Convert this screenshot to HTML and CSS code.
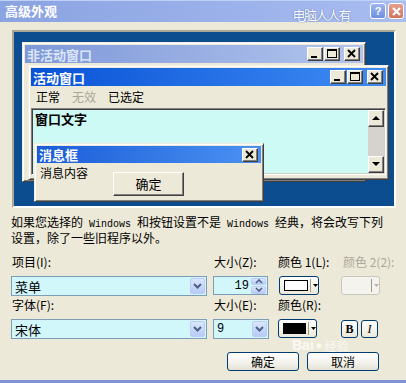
FILE: index.html
```html
<!DOCTYPE html>
<html lang="zh-CN">
<head>
    <meta charset="UTF-8">
    <title>高级外观</title>
    <link rel="stylesheet" href="styles.css">
</head>
<body>
<div class="dlg">
    <!-- title bar -->
    <div class="titlebar">
        <span class="title">高级外观</span>
        <span class="mark">电脑人人有</span>
        <span class="tb-btn help">?</span>
        <span class="tb-btn close">
            <svg width="11" height="11" viewBox="0 0 11 11"><path d="M2 2 L9 9 M9 2 L2 9" stroke="#fff" stroke-width="2.2"/></svg>
        </span>
    </div>

    <!-- preview of the windows -->
    <div class="preview">
        <div class="win inactive">
            <div class="cap">
                <span>非活动窗口</span>
                <div class="capbtns">
                    <span class="cbtn"><svg width="14" height="12"><rect x="3" y="8" width="6" height="2" fill="#000"/></svg></span>
                    <span class="cbtn"><svg width="14" height="12"><rect x="2.5" y="1.5" width="9" height="8" fill="none" stroke="#000"/><rect x="2" y="1" width="10" height="2" fill="#000"/></svg></span>
                    <span class="cbtn gap"><svg width="14" height="12"><path d="M3 2 L10 9 M10 2 L3 9" stroke="#000" stroke-width="1.8"/></svg></span>
                </div>
            </div>
        </div>

        <div class="win active">
            <div class="cap">
                <span>活动窗口</span>
                <div class="capbtns">
                    <span class="cbtn"><svg width="14" height="12"><rect x="3" y="8" width="6" height="2" fill="#000"/></svg></span>
                    <span class="cbtn"><svg width="14" height="12"><rect x="2.5" y="1.5" width="9" height="8" fill="none" stroke="#000"/><rect x="2" y="1" width="10" height="2" fill="#000"/></svg></span>
                    <span class="cbtn gap"><svg width="14" height="12"><path d="M3 2 L10 9 M10 2 L3 9" stroke="#000" stroke-width="1.8"/></svg></span>
                </div>
            </div>
            <div class="menu">
                <span>正常</span>
                <span class="dis">无效</span>
                <span>已选定</span>
            </div>
            <div class="client">
                <b class="wtext">窗口文字</b>
                <div class="scroll">
                    <span class="sbtn"><svg width="8" height="5"><path d="M0 4 L4 0 L8 4 Z" fill="#000"/></svg></span>
                    <span class="track"></span>
                    <span class="sbtn"><svg width="8" height="5"><path d="M0 0 L8 0 L4 4 Z" fill="#000"/></svg></span>
                </div>
            </div>
        </div>

        <div class="win msg">
            <div class="cap">
                <span>消息框</span>
                <div class="capbtns">
                    <span class="cbtn"><svg width="14" height="12"><path d="M3 2 L10 9 M10 2 L3 9" stroke="#000" stroke-width="1.8"/></svg></span>
                </div>
            </div>
            <div class="msgbody">
                <span>消息内容</span>
                <span class="okbtn">确定</span>
            </div>
        </div>
    </div>

    <p class="note">如果您选择的<span class="en"> Windows </span>和按钮设置不是<span class="en"> Windows </span>经典，将会改写下列<br>设置，除了一些旧程序以外。</p>

    <!-- item / font settings -->
    <div class="form">
        <span class="lbl">项目(I):</span>
        <span class="lbl">大小(Z):</span>
        <span class="lbl">颜色 1(L):</span>
        <span class="lbl dis">颜色 2(2):</span>

        <div class="combo wide">
            <span>菜单</span>
            <span class="drop"><svg width="9" height="6"><path d="M1 1 L4.5 4.5 L8 1" fill="none" stroke="#4d6185" stroke-width="2"/></svg></span>
        </div>
        <div class="spin">
            <span>19</span>
            <span class="arrows">
                <span class="half"><svg width="8" height="5"><path d="M1 4 L4 1 L7 4" fill="none" stroke="#4d6185" stroke-width="1.6"/></svg></span>
                <span class="half"><svg width="8" height="5"><path d="M1 1 L4 4 L7 1" fill="none" stroke="#4d6185" stroke-width="1.6"/></svg></span>
            </span>
        </div>
        <div class="colbtn">
            <span class="swatch white"></span>
            <span class="sep"></span>
            <svg width="5" height="3"><path d="M0 0 L5 0 L2.5 3 Z" fill="#000"/></svg>
        </div>
        <div class="colbtn off">
            <span class="swatch none"></span>
            <span class="sep"></span>
            <svg width="5" height="3"><path d="M0 0 L5 0 L2.5 3 Z" fill="#b5b3a8"/></svg>
        </div>

        <span class="lbl">字体(F):</span>
        <span class="lbl">大小(E):</span>
        <span class="lbl">颜色(R):</span>
        <span></span>

        <div class="combo wide">
            <span>宋体</span>
            <span class="drop"><svg width="9" height="6"><path d="M1 1 L4.5 4.5 L8 1" fill="none" stroke="#4d6185" stroke-width="2"/></svg></span>
        </div>
        <div class="combo small">
            <span class="num">9</span>
            <span class="drop"><svg width="9" height="6"><path d="M1 1 L4.5 4.5 L8 1" fill="none" stroke="#4d6185" stroke-width="2"/></svg></span>
        </div>
        <div class="colbtn second">
            <span class="swatch black"></span>
            <span class="sep"></span>
            <svg width="5" height="3"><path d="M0 0 L5 0 L2.5 3 Z" fill="#000"/></svg>
        </div>
        <div class="styles">
            <span class="sq bold">B</span>
            <span class="sq ital">I</span>
        </div>
    </div>

    <div class="actions">
        <span class="btn">确定</span>
        <span class="btn">取消</span>
    </div>

    <div class="wm"><span class="wm-bai">Bai</span><span class="wm-paw">●</span><span class="wm-jy">经验</span></div>
</div>
</body>
</html>
```

FILE: styles.css
```css
body {
    margin: 0;
    padding: 0;
    font-family: "Noto Sans CJK SC", "Liberation Sans", sans-serif;
    font-size: 12px;
    background-color: #ece9d8;
}
.dlg {
    position: relative;
    width: 406px;
    height: 383px;
    box-sizing: border-box;
    background-color: #ece9d8;
    border-bottom: 3px solid #7e91d2;
    overflow: hidden;
}

/* title bar */
.titlebar {
    height: 22px;
    display: flex;
    align-items: center;
    background: linear-gradient(to right, #8aa3e1, #9fb5ec 70%, #a9bdf0);
    box-shadow: inset 0 1px #bfd0f6;
}
.title {
    margin-left: 5px;
    color: #fff;
    font-weight: bold;
    font-size: 13px;
    line-height: 16px;
}
.mark {
    margin-left: auto;
    margin-right: 20px;
    color: #fff;
    font-family: "Noto Sans CJK SC", sans-serif;
    font-size: 13px;
    letter-spacing: -1.5px;
    margin-top: 6px;
    text-shadow: 0 0 1px #5d74b0, 0 0 1px #5d74b0;
}
.tb-btn {
    width: 16px;
    height: 16px;
    box-sizing: border-box;
    border: 1px solid #fff;
    border-radius: 3px;
    display: flex;
    align-items: center;
    justify-content: center;
    margin-right: 2px;
    color: #fff;
    font-weight: bold;
    font-family: "Liberation Sans", sans-serif;
    font-size: 11px;
}
.tb-btn.help {
    background: linear-gradient(#9db4f0, #6e8fe0);
}
.tb-btn.close {
    background: linear-gradient(#e6a08f, #d3725d);
}

/* preview area */
.preview {
    position: relative;
    margin: 8px 0 0 12px;
    width: 384px;
    height: 178px;
    box-sizing: border-box;
    border: 2px solid;
    border-color: #aca899 #fff #fff #aca899;
    background-color: #0c4d90;
}
.win {
    position: absolute;
    box-sizing: border-box;
    background-color: #ece9d8;
    border: 1px solid;
    border-color: #f1efe2 #404040 #404040 #f1efe2;
    box-shadow: inset 1px 1px #fff, inset -1px -1px #808080;
    padding: 2px;
}
.win.inactive {
    left: 8px;
    top: 10px;
    width: 344px;
    height: 140px;
}
.win.active {
    left: 14px;
    top: 33px;
    width: 361px;
    height: 115px;
}
.win.msg {
    left: 20px;
    top: 111px;
    width: 230px;
    height: 59px;
}
.cap {
    height: 18px;
    display: flex;
    align-items: center;
    padding-left: 2px;
    padding-right: 3px;
    color: #fff;
    font-weight: bold;
    font-size: 13px;
    background: linear-gradient(to right, #0a52d6, #3f8cf4);
}
.inactive .cap {
    color: #dbe4f7;
    background: linear-gradient(to right, #7e98d8, #b3c5ee);
}
.msg .cap {
    height: 17px;
    background: linear-gradient(to right, #1a5cd8, #4c92f2);
}
.capbtns {
    margin-left: auto;
    display: flex;
    gap: 1px;
}
.cbtn {
    width: 16px;
    height: 14px;
    box-sizing: border-box;
    background-color: #ece9d8;
    border: 1px solid;
    border-color: #fff #404040 #404040 #fff;
    box-shadow: inset -1px -1px #808080;
    display: flex;
}
.cbtn.gap {
    margin-left: 3px;
}
.menu {
    height: 21px;
    display: flex;
    align-items: center;
    gap: 12px;
    padding-left: 5px;
}
.menu .dis {
    color: #aca899;
}
.client {
    margin-top: 1px;
    height: 67px;
    box-sizing: border-box;
    border: 1px solid;
    border-color: #808080 #fff #fff #808080;
    box-shadow: inset 1px 1px #404040, inset -1px -1px #d4d0c8;
    background-color: #cdfaf5;
    display: flex;
    padding: 1px;
}
.wtext {
    margin: 1px 0 0 2px;
    font-size: 13px;
    line-height: 15px;
}
.scroll {
    margin-left: auto;
    width: 16px;
    display: flex;
    flex-direction: column;
}
.sbtn {
    height: 17px;
    box-sizing: border-box;
    background-color: #ece9d8;
    border: 1px solid;
    border-color: #fff #404040 #404040 #fff;
    box-shadow: inset -1px -1px #808080;
    display: flex;
    align-items: center;
    justify-content: center;
}
.track {
    flex: 1;
    background-color: #d6d3ce;
}
.msgbody {
    display: flex;
    align-items: flex-start;
    padding: 3px 3px 0 3px;
    line-height: 14px;
}
.okbtn {
    margin: 6px 0 0 25px;
    width: 71px;
    height: 24px;
    box-sizing: border-box;
    border: 1px solid;
    border-color: #fff #404040 #404040 #fff;
    box-shadow: inset -1px -1px #808080;
    display: flex;
    align-items: center;
    justify-content: center;
    font-size: 13px;
}

/* explanation */
.note {
    margin: 6px 0 0 11px;
    height: 30px;
    line-height: 16px;
    white-space: nowrap;
}
.en {
    font-family: "Liberation Mono", monospace;
    font-size: 10px;
    line-height: 10px;
}

/* settings grid */
.form {
    margin: 11px 0 0 11px;
    display: grid;
    grid-template-columns: 202px 64px 64px 60px;
    grid-template-rows: 14px 27px 16px 27px;
    align-items: end;
}
.lbl {
    line-height: 14px;
    white-space: nowrap;
    padding-left: 1px;
}
.lbl.dis {
    color: #aca899;
    padding-left: 2px;
}
.combo {
    height: 20px;
    box-sizing: border-box;
    border: 1px solid #7f9db9;
    background-color: #d2f7fb;
    display: flex;
    align-items: center;
    padding-left: 3px;
    font-size: 13px;
}
.combo.wide {
    width: 196px;
}
.combo.small {
    width: 56px;
}
.combo .num {
    font-family: "Liberation Mono", monospace;
    font-size: 12px;
}
.drop {
    margin-left: auto;
    margin-right: 1px;
    width: 15px;
    height: 16px;
    box-sizing: border-box;
    border: 1px solid #bccdf5;
    border-radius: 2px;
    background: linear-gradient(#dbe5fd, #b8cbf6);
    display: flex;
    align-items: center;
    justify-content: center;
}
.spin {
    width: 55px;
    height: 19px;
    margin-bottom: 1px;
    box-sizing: border-box;
    border: 1px solid #7f9db9;
    background-color: #d2f7fb;
    display: flex;
    align-items: center;
    justify-content: flex-end;
    font-family: "Liberation Mono", monospace;
    gap: 2px;
    padding-right: 1px;
}
.arrows {
    width: 15px;
    height: 16px;
    display: flex;
    flex-direction: column;
    gap: 1px;
}
.half {
    flex: 1;
    border: 1px solid #bccdf5;
    border-radius: 2px;
    background: linear-gradient(#dbe5fd, #b8cbf6);
    display: flex;
    align-items: center;
    justify-content: center;
}
.colbtn {
    margin-left: 2px;
    margin-bottom: 1px;
    width: 40px;
    height: 19px;
    box-sizing: border-box;
    border: 1px solid #003c74;
    border-radius: 3px;
    background: linear-gradient(#fff, #ece9d8);
    display: flex;
    align-items: center;
    padding-left: 4px;
}
.colbtn.second {
    margin-left: 1px;
    width: 39px;
}
.colbtn.off {
    margin-left: 0;
    width: 39px;
    border-color: #c9c7ba;
    background: #f4f3ee;
}
.swatch {
    width: 25px;
    height: 11px;
    box-sizing: border-box;
    border: 1px solid #000;
}
.swatch.white {
    background-color: #fff;
}
.swatch.black {
    background-color: #000;
}
.swatch.none {
    border: none;
}
.sep {
    width: 1px;
    height: 13px;
    background-color: #9d9b8e;
    margin: 0 2px 0 2px;
}
.styles {
    display: flex;
    gap: 3px;
    margin-bottom: 1px;
}
.sq {
    width: 17px;
    height: 18px;
    box-sizing: border-box;
    border: 1px solid #003c74;
    border-radius: 3px;
    background: linear-gradient(#fff, #ece9d8);
    display: flex;
    align-items: center;
    justify-content: center;
    font-family: "Liberation Serif", serif;
    font-size: 12px;
}
.sq.bold {
    font-weight: bold;
}
.sq.ital {
    font-style: italic;
}

/* bottom buttons */
.actions {
    margin: 13px 27px 0 0;
    display: flex;
    justify-content: flex-end;
    gap: 8px;
}
.btn {
    width: 72px;
    height: 19px;
    box-sizing: border-box;
    border: 1px solid #003c74;
    border-radius: 3px;
    background: linear-gradient(#fff, #f2f1ea 60%, #e3e1d4);
    display: flex;
    align-items: center;
    justify-content: center;
}

/* baidu watermark, lies over the buttons */
.wm {
    position: absolute;
    left: 292px;
    top: 339px;
    height: 13px;
    color: rgba(255, 255, 255, 0.75);
    font-family: "Liberation Sans", sans-serif;
    font-size: 14px;
    line-height: 13px;
    font-weight: bold;
    display: flex;
    align-items: center;
    gap: 2px;
}
.wm-paw {
    font-size: 11px;
}
.wm-jy {
    font-family: "Noto Sans CJK SC", sans-serif;
    font-size: 12px;
    font-weight: normal;
}
```
